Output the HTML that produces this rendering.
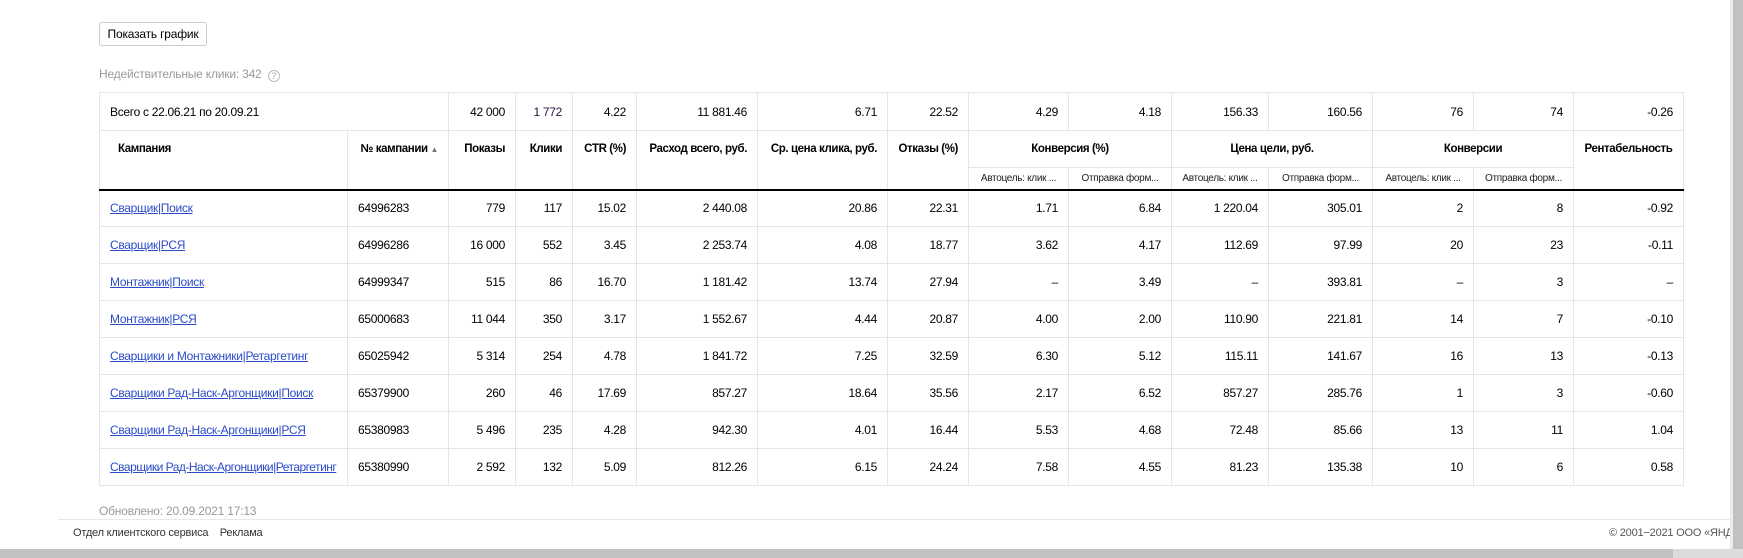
<!DOCTYPE html>
<html><head><meta charset="utf-8"><style>
*{margin:0;padding:0;box-sizing:border-box}
body{width:1743px;height:558px;overflow:hidden;background:#fff;font-family:"Liberation Sans","DejaVu Sans",sans-serif;font-size:12px;color:#000;position:relative}
.btn{position:absolute;left:99px;top:22px;width:108px;height:24px;border:1px solid #ccc;border-radius:3px;font-size:12px;line-height:22px;text-align:center;letter-spacing:-0.2px}
.inv{position:absolute;left:99px;top:67px;color:#999;font-size:12px;letter-spacing:-0.2px}
.inv span{display:inline-block;width:12px;height:12px;border:1px solid #bbb;border-radius:50%;font-size:9px;line-height:10px;text-align:center;color:#aaa;vertical-align:-1px;margin-left:3px}
table{position:absolute;left:99px;top:92px;border-collapse:collapse;table-layout:fixed;width:1584px}
td,th{border:1px solid #e4e4ea;padding:0 10px;text-align:right;white-space:nowrap;overflow:hidden;font-size:12px;letter-spacing:-0.3px}
th{font-weight:bold;vertical-align:top;padding-top:12px;font-size:11.5px;letter-spacing:-0.4px}
.tot td{height:38px}
.h1 th{height:37px}
.h2 th{height:22px;font-weight:normal;font-size:10px;color:#222;padding-top:0;vertical-align:middle;text-align:center;letter-spacing:-0.3px}
.h2{border-bottom:2px solid #000}
th.c{text-align:center;vertical-align:middle;padding-top:0}
th.l{text-align:left;padding-left:18px}
tr.d td{height:37px}
td.l{text-align:left}
a{color:#2b4bc8;text-decoration:underline}
.upd{position:absolute;left:99px;top:504px;color:#999;font-size:12px;letter-spacing:-0.2px}
.fl{position:absolute;left:58px;top:519px;width:1672px;border-top:1px solid #e8e8e8}
.ft{position:absolute;left:73px;top:527px;font-size:11px;color:#333;letter-spacing:-0.2px}
.cp{position:absolute;left:1609px;top:527px;font-size:11px;color:#555;white-space:nowrap;width:121px;overflow:hidden;letter-spacing:-0.2px}
.vs{position:absolute;left:1730px;top:0;width:13px;height:549px;background:#c1c1c1;border-left:3px solid #ececec}
.hs{position:absolute;left:0;top:549px;width:1673px;height:9px;background:#c1c1c1}
.hs2{position:absolute;left:1673px;top:549px;width:70px;height:9px;background:#dcdcdc}
</style></head><body>
<div class="btn">Показать график</div>
<div class="inv">Недействительные клики: 342 <span>?</span></div>
<table>
<colgroup><col style="width:248px"><col style="width:101px"><col style="width:67px"><col style="width:57px"><col style="width:64px"><col style="width:121px"><col style="width:130px"><col style="width:81px"><col style="width:100px"><col style="width:103px"><col style="width:97px"><col style="width:104px"><col style="width:101px"><col style="width:100px"><col style="width:110px"></colgroup>
<tr class="tot"><td colspan="2" class="l">Всего с 22.06.21 по 20.09.21</td><td>42 000</td><td style="color:#2a1040">1 772</td><td>4.22</td><td>11 881.46</td><td>6.71</td><td>22.52</td><td>4.29</td><td>4.18</td><td>156.33</td><td>160.56</td><td>76</td><td>74</td><td>-0.26</td></tr>
<tr class="h1"><th rowspan="2" class="l">Кампания</th><th rowspan="2">№ кампании <span style="font-size:8px;color:#777">▲</span></th><th rowspan="2">Показы</th><th rowspan="2">Клики</th><th rowspan="2">CTR (%)</th><th rowspan="2">Расход всего, руб.</th><th rowspan="2">Ср. цена клика, руб.</th><th rowspan="2">Отказы (%)</th><th colspan="2" class="c">Конверсия (%)</th><th colspan="2" class="c">Цена цели, руб.</th><th colspan="2" class="c">Конверсии</th><th rowspan="2" style="text-align:center">Рентабельность</th></tr>
<tr class="h2"><th>Автоцель: клик ...</th><th>Отправка форм...</th><th>Автоцель: клик ...</th><th>Отправка форм...</th><th>Автоцель: клик ...</th><th>Отправка форм...</th></tr>
<tr class="d"><td class="l"><a>Сварщик|Поиск</a></td><td class="l">64996283</td><td>779</td><td>117</td><td>15.02</td><td>2 440.08</td><td>20.86</td><td>22.31</td><td>1.71</td><td>6.84</td><td>1 220.04</td><td>305.01</td><td>2</td><td>8</td><td>-0.92</td></tr>
<tr class="d"><td class="l"><a>Сварщик|РСЯ</a></td><td class="l">64996286</td><td>16 000</td><td>552</td><td>3.45</td><td>2 253.74</td><td>4.08</td><td>18.77</td><td>3.62</td><td>4.17</td><td>112.69</td><td>97.99</td><td>20</td><td>23</td><td>-0.11</td></tr>
<tr class="d"><td class="l"><a>Монтажник|Поиск</a></td><td class="l">64999347</td><td>515</td><td>86</td><td>16.70</td><td>1 181.42</td><td>13.74</td><td>27.94</td><td>–</td><td>3.49</td><td>–</td><td>393.81</td><td>–</td><td>3</td><td>–</td></tr>
<tr class="d"><td class="l"><a>Монтажник|РСЯ</a></td><td class="l">65000683</td><td>11 044</td><td>350</td><td>3.17</td><td>1 552.67</td><td>4.44</td><td>20.87</td><td>4.00</td><td>2.00</td><td>110.90</td><td>221.81</td><td>14</td><td>7</td><td>-0.10</td></tr>
<tr class="d"><td class="l"><a>Сварщики и Монтажники|Ретаргетинг</a></td><td class="l">65025942</td><td>5 314</td><td>254</td><td>4.78</td><td>1 841.72</td><td>7.25</td><td>32.59</td><td>6.30</td><td>5.12</td><td>115.11</td><td>141.67</td><td>16</td><td>13</td><td>-0.13</td></tr>
<tr class="d"><td class="l"><a>Сварщики Рад-Наск-Аргонщики|Поиск</a></td><td class="l">65379900</td><td>260</td><td>46</td><td>17.69</td><td>857.27</td><td>18.64</td><td>35.56</td><td>2.17</td><td>6.52</td><td>857.27</td><td>285.76</td><td>1</td><td>3</td><td>-0.60</td></tr>
<tr class="d"><td class="l"><a>Сварщики Рад-Наск-Аргонщики|РСЯ</a></td><td class="l">65380983</td><td>5 496</td><td>235</td><td>4.28</td><td>942.30</td><td>4.01</td><td>16.44</td><td>5.53</td><td>4.68</td><td>72.48</td><td>85.66</td><td>13</td><td>11</td><td>1.04</td></tr>
<tr class="d"><td class="l"><a style="letter-spacing:-0.5px">Сварщики Рад-Наск-Аргонщики|Ретаргетинг</a></td><td class="l">65380990</td><td>2 592</td><td>132</td><td>5.09</td><td>812.26</td><td>6.15</td><td>24.24</td><td>7.58</td><td>4.55</td><td>81.23</td><td>135.38</td><td>10</td><td>6</td><td>0.58</td></tr>
</table>
<div class="upd">Обновлено: 20.09.2021 17:13</div>
<div class="fl"></div>
<div class="ft">Отдел клиентского сервиса&nbsp;&nbsp;&nbsp;&nbsp;Реклама</div>
<div class="cp">© 2001−2021 ООО «ЯНДЕКС»</div>
<div class="vs"></div>
<div class="hs"></div><div class="hs2"></div>
</body></html>
